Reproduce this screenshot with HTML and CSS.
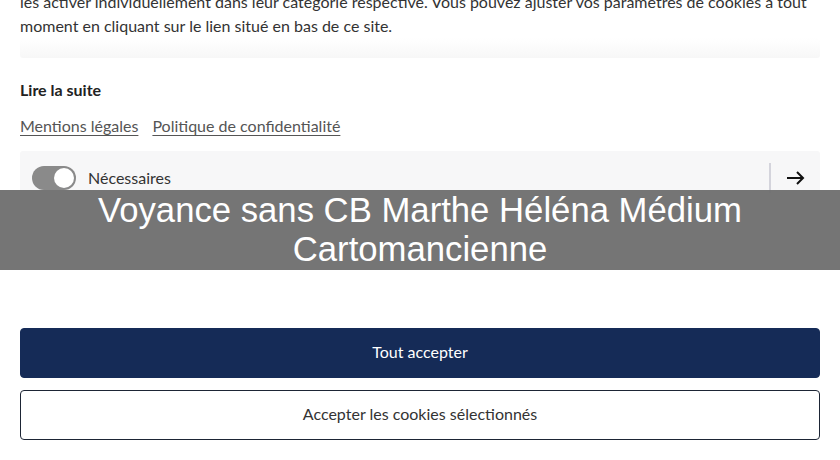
FILE: index.html
```html
<!DOCTYPE html>
<html lang="fr">
<head>
<meta charset="utf-8">
<link rel="stylesheet" href="styles.css">
</head>
<body>
<div class="panel">
  <div class="intro">
    <p class="text">les activer individuellement dans leur catégorie respective. Vous pouvez ajuster vos paramètres de cookies à tout moment en cliquant sur le lien situé en bas de ce site.</p>
    <div class="fade"></div>
  </div>
  <div class="more">Lire la suite</div>
  <div class="links">
    <a href="#" class="link">Mentions légales</a>
    <a href="#" class="link">Politique de confidentialité</a>
  </div>
  <div class="category">
    <div class="toggle"><span class="knob"></span></div>
    <span class="cat-label">Nécessaires</span>
    <span class="sep"></span>
    <svg class="arrow" width="20" height="16" viewBox="0 0 20 16"><path d="M1 8h16M11 2l6 6-6 6" fill="none" stroke="#111" stroke-width="2"/></svg>
  </div>
  <div class="spacer"></div>
  <div class="actions">
    <button class="btn btn-primary">Tout accepter</button>
    <button class="btn btn-secondary">Accepter les cookies sélectionnés</button>
  </div>
</div>
<div class="banner">Voyance sans CB Marthe Héléna Médium Cartomancienne</div>
</body>
</html>
```
FILE: styles.css
```css
html, body {
  margin: 0;
  padding: 0;
  background: #fff;
  overflow: hidden;
  height: 460px;
}
body {
  font-family: Lato, "Open Sans", sans-serif;
  color: #333;
  font-size: 16px;
}
.panel {
  padding: 0 20px;
}
.intro {
  margin-top: -10px;
}
.text {
  margin: 0;
  line-height: 24px;
  color: #333;
}
.fade {
  height: 20px;
  background: linear-gradient(#fff, #f7f7f7);
  border-radius: 3px;
}
.more {
  font-weight: bold;
  color: #222;
  margin-top: 20px;
  line-height: 24px;
}
.links {
  display: flex;
  gap: 14px;
  margin-top: 12px;
  line-height: 24px;
}
.link {
  color: #555;
  text-decoration: underline;
  text-underline-offset: 3px;
}
.category {
  box-sizing: border-box;
  margin-top: 13px;
  background: #f7f7f8;
  height: 56px;
  display: flex;
  align-items: center;
  padding: 0 12px 2px;
  border-radius: 3px;
}
.toggle {
  width: 44px;
  height: 24px;
  border-radius: 12px;
  background: #8a8a8a;
  position: relative;
}
.knob {
  position: absolute;
  right: 2px;
  top: 2px;
  width: 20px;
  height: 20px;
  border-radius: 50%;
  background: #fff;
}
.cat-label {
  margin-left: 12px;
  margin-bottom: 2px;
  color: #333;
  flex: 1;
}
.sep {
  width: 2px;
  height: 30px;
  background: #d4d4dc;
  margin-right: 15px;
}
.arrow {
  display: block;
  margin-right: 2px;
}
.spacer {
  height: 121px;
}
.actions {
  display: flex;
  flex-direction: column;
  gap: 12px;
}
.btn {
  font-family: inherit;
  font-size: 16px;
  height: 50px;
  border-radius: 4px;
  width: 100%;
  padding-bottom: 4px;
  cursor: pointer;
}
.btn-primary {
  background: #152b57;
  color: #fff;
  border: 1px solid #152b57;
}
.btn-secondary {
  background: #fff;
  color: #333;
  border: 1px solid #1d2535;
}
.banner {
  position: absolute;
  left: 0;
  right: 0;
  top: 190px;
  height: 80px;
  background: rgba(110, 110, 110, 0.95);
  color: #fff;
  font-family: "Liberation Sans", Arial, sans-serif;
  font-size: 34.7px;
  line-height: 39px;
  text-align: center;
  display: flex;
  align-items: center;
  justify-content: center;
  padding: 0 90px;
}
```
